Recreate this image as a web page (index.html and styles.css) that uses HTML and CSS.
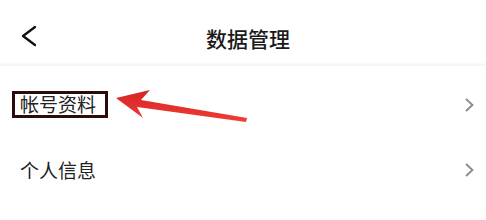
FILE: index.html
```html
<!DOCTYPE html>
<html lang="zh-CN">
<head>
<meta charset="UTF-8" />
<meta name="viewport" content="width=device-width, initial-scale=1.0"/>
<title>数据管理</title>
<link rel="stylesheet" href="styles.css">
</head>
<body>
  <div class="header">
    <svg class="back" width="40" height="40" viewBox="0 0 40 40">
      <polyline points="15,5 3,14 15,23" fill="none" stroke="#111" stroke-width="2.3" stroke-linecap="round" stroke-linejoin="round"/>
    </svg>
    <div class="title">数据管理</div>
    <div class="spacer"></div>
  </div>
  <div class="sep"></div>

  <div class="list">
    <div class="row">
      <span class="label marked">帐号资料</span>
      <svg class="more" width="12" height="16" viewBox="0 0 12 16">
        <polyline points="2,2 8.5,8 2,14" fill="none" stroke="#8a8a8a" stroke-width="1.8"/>
      </svg>
    </div>
    <div class="row">
      <span class="label">个人信息</span>
      <svg class="more" width="12" height="16" viewBox="0 0 12 16">
        <polyline points="2,2 8.5,8 2,14" fill="none" stroke="#8a8a8a" stroke-width="1.8"/>
      </svg>
    </div>
  </div>

  <!-- 标注箭头 -->
  <svg class="arrow" width="486" height="220" viewBox="0 0 486 220">
    <defs>
      <linearGradient id="red" x1="0" y1="0" x2="0" y2="1">
        <stop offset="0" stop-color="#d42424"/>
        <stop offset="1" stop-color="#ef3d36"/>
      </linearGradient>
    </defs>
    <polygon points="116,98 150,90 141,100 247,118 246,122 137,107 143,118" fill="url(#red)"/>
  </svg>
</body>
</html>
```

FILE: styles.css
```css
body {
  margin: 0;
  background: #fff;
  font-family: "Noto Sans CJK SC", "Noto Sans", sans-serif;
  color: #222;
}
.header {
  height: 48px;
  padding-top: 14px;
  display: grid;
  grid-template-columns: 60px 1fr 60px;
  align-items: center;
}
.back {
  margin: 8px 0 0 20px;
  align-self: start;
}
.title {
  text-align: center;
  font-size: 21px;
  line-height: 21px;
  font-weight: 500;
  color: #1a1a1a;
  padding-left: 10px;
}
.sep {
  height: 4px;
  background: linear-gradient(#fff, #f2f2f2);
}
.list {
  padding-top: 6px;
}
.row {
  height: 65px;
  display: flex;
  align-items: center;
  justify-content: space-between;
  padding: 0 10px 0 20px;
}
.label {
  font-size: 19px;
  line-height: 21px;
}
.marked {
  line-height: 19px;
  border: 3px solid #2c0b0b;
  padding: 0 9px 2px 5px;
  margin-left: -8px;
}
.arrow {
  position: absolute;
  top: 0;
  left: 0;
}
```
